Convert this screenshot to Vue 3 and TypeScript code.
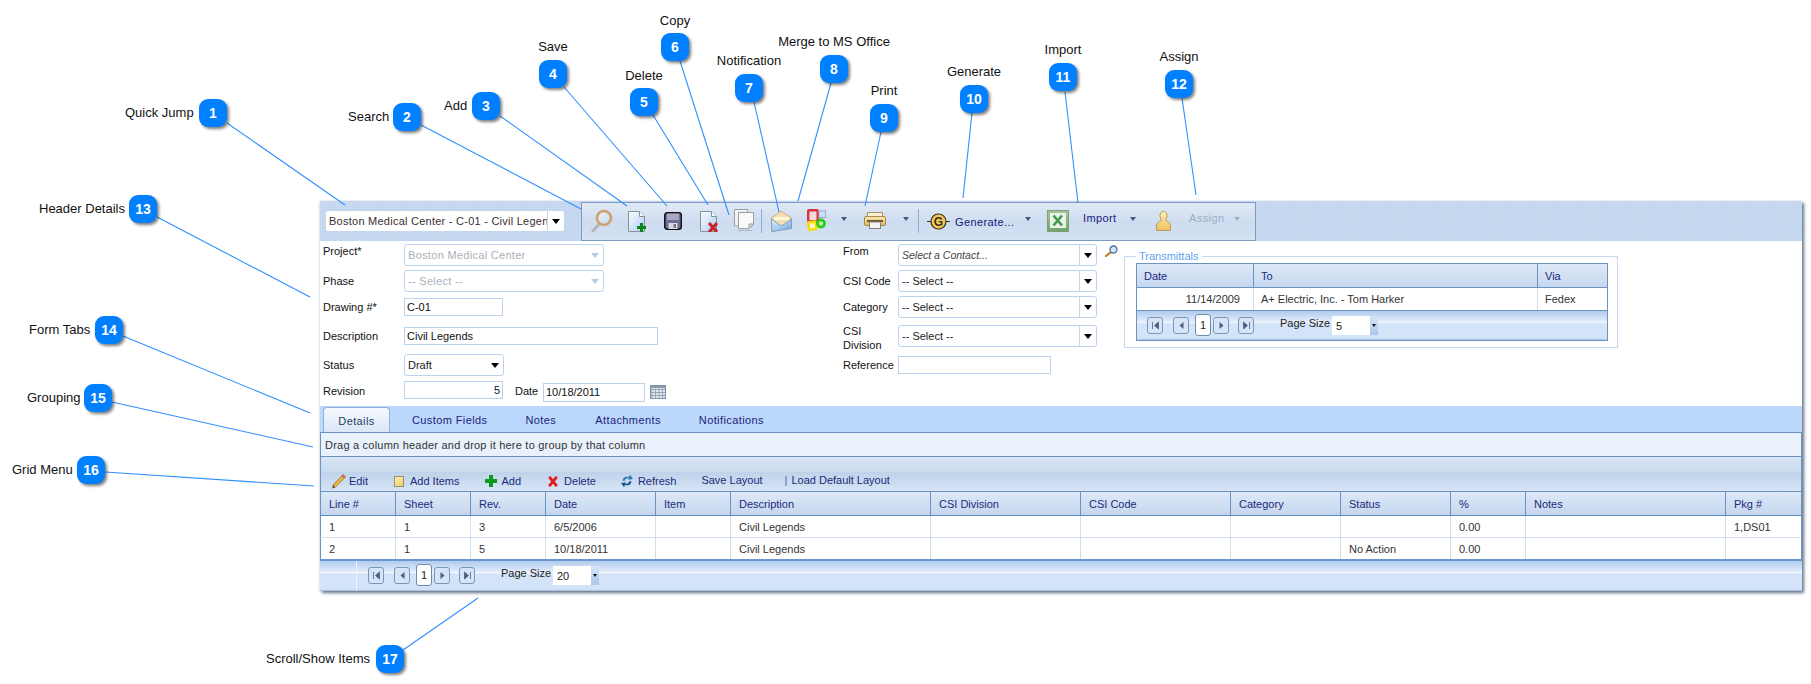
<script setup lang="ts">
interface Callout {
  n: number
  x: number
  y: number
  label: string
  lx: number
  ly: number
  centered: boolean
  line: [number, number, number, number]
}

const callouts: Callout[] = [
  { n: 1, x: 213, y: 113, label: 'Quick Jump', lx: 125, ly: 113, centered: false, line: [227, 123, 345, 205] },
  { n: 2, x: 407, y: 117, label: 'Search', lx: 348, ly: 117, centered: false, line: [421, 125, 581, 209] },
  { n: 3, x: 486, y: 106, label: 'Add', lx: 444, ly: 106, centered: false, line: [500, 116, 627, 206] },
  { n: 4, x: 553, y: 74, label: 'Save', lx: 553, ly: 47, centered: true, line: [564, 87, 667, 206] },
  { n: 5, x: 644, y: 102, label: 'Delete', lx: 644, ly: 76, centered: true, line: [653, 115, 708, 205] },
  { n: 6, x: 675, y: 47, label: 'Copy', lx: 675, ly: 21, centered: true, line: [680, 61, 729, 215] },
  { n: 7, x: 749, y: 88, label: 'Notification', lx: 749, ly: 61, centered: true, line: [754, 102, 779, 212] },
  { n: 8, x: 834, y: 69, label: 'Merge to MS Office', lx: 834, ly: 42, centered: true, line: [831, 83, 798, 201] },
  { n: 9, x: 884, y: 118, label: 'Print', lx: 884, ly: 91, centered: true, line: [881, 132, 865, 206] },
  { n: 10, x: 974, y: 99, label: 'Generate', lx: 974, ly: 72, centered: true, line: [972, 113, 963, 198] },
  { n: 11, x: 1063, y: 77, label: 'Import', lx: 1063, ly: 50, centered: true, line: [1065, 92, 1078, 203] },
  { n: 12, x: 1179, y: 84, label: 'Assign', lx: 1179, ly: 57, centered: true, line: [1182, 98, 1196, 195] },
  { n: 13, x: 143, y: 209, label: 'Header Details', lx: 39, ly: 209, centered: false, line: [157, 217, 310, 297] },
  { n: 14, x: 109, y: 330, label: 'Form Tabs', lx: 29, ly: 330, centered: false, line: [123, 336, 310, 413] },
  { n: 15, x: 98, y: 398, label: 'Grouping', lx: 27, ly: 398, centered: false, line: [112, 402, 313, 447] },
  { n: 16, x: 91, y: 470, label: 'Grid Menu', lx: 12, ly: 470, centered: false, line: [105, 472, 314, 486] },
  { n: 17, x: 390, y: 659, label: 'Scroll/Show Items', lx: 266, ly: 659, centered: false, line: [403, 650, 478, 598] }
]

const gridHeads: string[] = ['Line #', 'Sheet', 'Rev.', 'Date', 'Item', 'Description', 'CSI Division', 'CSI Code', 'Category', 'Status', '%', 'Notes', 'Pkg #']
const gridRows: string[][] = [
  ['1', '1', '3', '6/5/2006', '', 'Civil Legends', '', '', '', '', '0.00', '', '1,DS01'],
  ['2', '1', '5', '10/18/2011', '', 'Civil Legends', '', '', '', 'No Action', '0.00', '', '']
]
const tabs: string[] = ['Custom Fields', 'Notes', 'Attachments', 'Notifications']
const calCells: number[] = [0, 1, 2, 3]
</script>

<template>
  <div class="canvas">
    <div class="window">
      <header class="head">
        <div class="jump">
          <span class="jump-text">Boston Medical Center - C-01 - Civil Legends</span>
          <span class="drop"><i class="tri"></i></span>
        </div>
        <div class="ribbon">
          <svg class="ic i-search" viewBox="0 0 22 23" width="22" height="23">
            <defs>
              <linearGradient id="lens" x1="0" y1="0" x2="1" y2="1"><stop offset="0" stop-color="#eef4fb" /><stop offset="1" stop-color="#c3d6ec" /></linearGradient>
            </defs>
            <path d="M8 15L2 22" stroke="#b4b4b4" stroke-width="3" stroke-linecap="round" />
            <circle cx="13" cy="9" r="7" fill="url(#lens)" stroke="#c9a26e" stroke-width="2.6" />
          </svg>
          <svg class="ic i-add" viewBox="0 0 18 21" width="18" height="21">
            <defs>
              <linearGradient id="page" x1="0" y1="0" x2="1" y2="1"><stop offset="0" stop-color="#fff" /><stop offset="1" stop-color="#a9cbf4" /></linearGradient>
            </defs>
            <path d="M.5.5H11.500L16.500 5.500V20.500H.5Z" fill="url(#page)" stroke="#8b9098" />
            <path d="M11.500.5V5.500H16.500" fill="#fff" stroke="#8b9098" />
            <path d="M12 12h3v3h3v3h-3v3h-3v-3H9v-3h3z" fill="#07861c" />
          </svg>
          <svg class="ic i-save" viewBox="0 0 18 18" width="18" height="18">
            <rect x=".7" y=".7" width="16.600" height="16.600" rx="2.500" fill="#6f6a96" stroke="#111" stroke-width="1.400" />
            <rect x="3" y="1.500" width="12" height="6.500" fill="#a9a5c4" />
            <rect x="4.500" y="11" width="9" height="6" fill="#d8d8de" />
            <rect x="9.500" y="12" width="2.500" height="4" fill="#77738f" />
          </svg>
          <svg class="ic i-del" viewBox="0 0 18 21" width="18" height="21">
            <path d="M.5.5H11.500L16.500 5.500V20.500H.5Z" fill="url(#page)" stroke="#8b9098" />
            <path d="M11.500.5V5.500H16.500" fill="#fff" stroke="#8b9098" />
            <path d="M9 12l8 9M17 12l-8 9" stroke="#c8222a" stroke-width="3" />
          </svg>
          <svg class="ic i-copy" viewBox="0 0 20 22" width="20" height="22">
            <path d="M.5.5H13.500V17H.5Z" fill="#f2f2f2" stroke="#9a9fa6" />
            <path d="M4.500 3.500H19.500V15L15 19.500H4.500Z" fill="#fafafa" stroke="#9a9fa6" />
            <path d="M15 19.500V15H19.500Z" fill="#ddd" stroke="#9a9fa6" />
            <path d="M4 21.500H18" stroke="#a8b0ba" />
          </svg>
          <span class="sep s-a"></span>
          <svg class="ic i-mail" viewBox="0 0 21 22" width="21" height="22">
            <defs>
              <linearGradient id="env" x1="0" y1="0" x2="1" y2="1"><stop offset="0" stop-color="#e4f0fb" /><stop offset="1" stop-color="#6fa8de" /></linearGradient>
            </defs>
            <path d="M.5 8L10 1l10.500 7v9L1 21.500Z" fill="#f6deae" stroke="#b99a66" stroke-width=".7" />
            <path d="M3 7h15v3H3z" fill="#fff6dd" />
            <path d="M.5 9l10 7 10-7v9.500L1 21.500Z" fill="url(#env)" stroke="#6e93bb" stroke-width=".8" />
          </svg>
          <svg class="ic i-merge" viewBox="0 0 19 22" width="19" height="22">
            <rect x="1.200" y="1.200" width="9.500" height="11" rx="1" fill="#f5d9dc" stroke="#d8303c" stroke-width="2.400" />
            <rect x="12" y="2" width="6.500" height="6.500" fill="#cfe0f6" stroke="#8fb0de" />
            <rect x="1.500" y="13" width="7.500" height="7.500" rx="1" fill="#fff8b8" stroke="#f2dc10" stroke-width="2.600" transform="rotate(-8 5 16)" />
            <circle cx="14" cy="14.500" r="3.600" fill="#bdf0a0" stroke="#2ac818" stroke-width="2.600" />
          </svg>
          <i class="arr a-merge"></i>
          <svg class="ic i-print" viewBox="0 0 22 17" width="22" height="17">
            <defs>
              <linearGradient id="prt" x1="0" y1="0" x2="0" y2="1"><stop offset="0" stop-color="#fbeab8" /><stop offset="1" stop-color="#e6b24c" /></linearGradient>
            </defs>
            <rect x="3.500" y=".5" width="15" height="5" fill="#f8efd2" stroke="#aa9466" />
            <rect x=".5" y="4.500" width="21" height="9" rx="1.500" fill="url(#prt)" stroke="#a88b4e" />
            <rect x="3" y="8" width="16" height="2" fill="#6a5a3a" />
            <rect x="5.500" y="10" width="11" height="6.500" fill="#f4f4f4" stroke="#85827a" />
          </svg>
          <i class="arr a-print"></i>
          <span class="sep s-b"></span>
          <svg class="ic i-g" viewBox="0 0 23 17" width="23" height="17">
            <path d="M0 8.500H23" stroke="#333" />
            <circle cx="11.500" cy="8.500" r="7.500" fill="#f3c95c" stroke="#3b2f14" stroke-width="1.200" />
            <text x="11.500" y="13" class="g-letter" text-anchor="middle">G</text>
          </svg>
          <span class="tool-text t-generate">Generate...</span>
          <i class="arr a-gen"></i>
          <svg class="ic i-xl" viewBox="0 0 22 22" width="22" height="22">
            <defs>
              <linearGradient id="xl" x1="0" y1="0" x2="0" y2="1"><stop offset="0" stop-color="#a9c4a0" /><stop offset="1" stop-color="#6ea468" /></linearGradient>
            </defs>
            <rect x=".5" y=".5" width="21" height="21" fill="url(#xl)" stroke="#7aa074" />
            <rect x="3" y="3" width="16" height="15" fill="#e8f2e6" />
            <path d="M6.500 5.500l8.500 10M15 5.500L6.500 15.500" stroke="#3f9a4a" stroke-width="2.600" />
          </svg>
          <span class="tool-text t-import">Import</span>
          <i class="arr a-imp"></i>
          <svg class="ic i-person" viewBox="0 0 15 20" width="15" height="20">
            <defs>
              <linearGradient id="per" x1="0" y1="0" x2="0" y2="1"><stop offset="0" stop-color="#fff0b0" /><stop offset="1" stop-color="#f0c060" /></linearGradient>
            </defs>
            <path d="M7.500.5C10 .5 11 2.500 11 4.500S10 8 9.500 9c0 1 4.500 2 5 5v5.500H.5V14C1 11 5.500 10 5.500 9 5 8 4 6.500 4 4.500S5 .5 7.500.5Z" fill="url(#per)" stroke="#b79a5a" />
          </svg>
          <span class="tool-text t-assign">Assign</span>
          <i class="arr a-assign"></i>
        </div>
      </header>

      <section class="form">
        <div class="col-left">
          <div class="row r-project">
            <label class="lab lab-top">Project*</label>
            <div class="combo combo-wide off"><span class="combo-text">Boston Medical Center</span><i class="tri tri-off"></i></div>
          </div>
          <div class="row r-phase">
            <label class="lab">Phase</label>
            <div class="combo combo-wide off"><span class="combo-text">-- Select --</span><i class="tri tri-off"></i></div>
          </div>
          <div class="row r-drawing">
            <label class="lab">Drawing #*</label>
            <div class="field f-short">C-01</div>
          </div>
          <div class="row r-desc">
            <label class="lab">Description</label>
            <div class="field f-long">Civil Legends</div>
          </div>
          <div class="row r-status">
            <label class="lab">Status</label>
            <div class="combo combo-status"><span class="combo-text dark">Draft</span><i class="tri"></i></div>
          </div>
          <div class="row r-rev">
            <label class="lab">Revision</label>
            <div class="field f-short num">5</div>
            <label class="lab-date">Date</label>
            <div class="field f-date">10/18/2011</div>
            <svg class="cal" viewBox="0 0 16 14" width="16" height="14">
              <rect x=".5" y=".5" width="15" height="13" fill="#dfe6ee" stroke="#7f8ea0" />
              <rect x="1" y="1" width="14" height="2" fill="#8a9bb0" />
              <g v-for="c in calCells" :key="c">
                <path :d="`M${2 + c * 3.5} 3.500V13`" stroke="#8a9bb0" stroke-width=".8" />
                <path :d="`M1 ${4.5 + c * 3}H15`" stroke="#8a9bb0" stroke-width=".8" />
              </g>
            </svg>
          </div>
        </div>

        <div class="col-right">
          <div class="row r-from">
            <label class="lab2 lab-top">From</label>
            <div class="combo combo-r"><em class="combo-text contact">Select a Contact...</em><span class="drop"><i class="tri"></i></span></div>
            <svg class="mini-search" viewBox="0 0 15 12" width="15" height="12">
              <path d="M7 7L2 11" stroke="#c47a20" stroke-width="2.200" stroke-linecap="round" />
              <circle cx="9.500" cy="4.500" r="3.500" fill="#cfe3f6" stroke="#4a6f98" stroke-width="1.300" />
            </svg>
          </div>
          <div class="row r-phase">
            <label class="lab2">CSI Code</label>
            <div class="combo combo-r"><span class="combo-text dark">-- Select --</span><span class="drop"><i class="tri"></i></span></div>
          </div>
          <div class="row r-cat">
            <label class="lab2">Category</label>
            <div class="combo combo-r"><span class="combo-text dark">-- Select --</span><span class="drop"><i class="tri"></i></span></div>
          </div>
          <div class="row r-div">
            <label class="lab2 lab-wrap">CSI Division</label>
            <div class="combo combo-r"><span class="combo-text dark">-- Select --</span><span class="drop"><i class="tri"></i></span></div>
          </div>
          <div class="row r-ref">
            <label class="lab2">Reference</label>
            <div class="field f-ref"></div>
          </div>
        </div>

        <fieldset class="trans">
          <legend>Transmittals</legend>
          <div class="tgrid">
            <div class="t-row t-head"><span>Date</span><span>To</span><span>Via</span></div>
            <div class="t-row t-body"><span class="t-date">11/14/2009</span><span>A+ Electric, Inc. - Tom Harker</span><span>Fedex</span></div>
            <div class="pager t-pager">
              <button class="pg first" type="button"><svg viewBox="0 0 9 9" width="9" height="9"><path d="M1.500 1v7M7.500 1L3.500 4.500l4 3.500z" fill="#4b5f80" stroke="#4b5f80" stroke-width=".8" /></svg></button>
              <button class="pg prev" type="button"><svg viewBox="0 0 9 9" width="9" height="9"><path d="M6.500 1L2.500 4.500l4 3.500z" fill="#4b5f80" /></svg></button>
              <span class="pg-cur">1</span>
              <button class="pg next" type="button"><svg viewBox="0 0 9 9" width="9" height="9"><path d="M2.500 1l4 3.500-4 3.500z" fill="#4b5f80" /></svg></button>
              <button class="pg last" type="button"><svg viewBox="0 0 9 9" width="9" height="9"><path d="M7.500 1v7M1.500 1l4 3.500-4 3.500z" fill="#4b5f80" stroke="#4b5f80" stroke-width=".8" /></svg></button>
              <span class="pg-label">Page Size</span>
              <div class="pg-size"><span>5</span><b class="pg-arrow"><i></i></b></div>
            </div>
          </div>
        </fieldset>
      </section>

      <nav class="tabs">
        <span class="tab active">Details</span>
        <span v-for="t in tabs" :key="t" class="tab">{{ t }}</span>
      </nav>

      <div class="group-bar">Drag a column header and drop it here to group by that column</div>

      <div class="menu">
        <span class="m m-edit">
          <svg viewBox="0 0 15 16" width="15" height="16"><path d="M2 12L12 1.500l2.500 2.500L4 14.500Z" fill="#e8b23c" stroke="#9a6a2a" stroke-width=".7" /><path d="M12 1.500l2.500 2.500-1.500 1.500L10.500 3Z" fill="#c86a5a" /><path d="M2 12l2 2.500-3 1z" fill="#5a4a3a" /></svg>
          Edit
        </span>
        <span class="m m-items"><i class="sq"></i>Add Items</span>
        <span class="m m-add">
          <svg viewBox="0 0 12 12" width="12" height="12"><path d="M4 0h4v4h4v4H8v4H4V8H0V4h4z" fill="#0a9a1c" /></svg>
          Add
        </span>
        <span class="m m-del">
          <svg viewBox="0 0 10 11" width="10" height="11"><path d="M1.200 .8l7.600 9.400M8.800 .8L1.200 10.200" stroke="#e01c1c" stroke-width="2.800" /></svg>
          Delete
        </span>
        <span class="m m-ref">
          <svg viewBox="0 0 12 14" width="12" height="14"><path d="M1.500 6.500C2 3 5 2 8 3L9 .8l3 4.200-5 .8L8 4.500C5.500 4 4 5 3.500 7Z" fill="#2a7ab8" /><path d="M10.500 7.500C10 11 7 12 4 11l-1 2.200L0 9l5-.8L4 9.500c2.500.5 4-.5 4.500-2.500Z" fill="#1a5a94" /></svg>
          Refresh
        </span>
        <span class="m m-save">Save Layout</span>
        <span class="m m-bar">|</span>
        <span class="m m-load">Load Default Layout</span>
      </div>

      <div class="g-row g-head"><span v-for="h in gridHeads" :key="h">{{ h }}</span></div>
      <div v-for="(r, i) in gridRows" :key="i" class="g-row g-body" :class="{ second: i === 1 }">
        <span v-for="(c, j) in r" :key="j">{{ c }}</span>
      </div>

      <footer class="pager w-pager">
        <span class="pg-sep"></span>
        <button class="pg first" type="button"><svg viewBox="0 0 9 9" width="9" height="9"><path d="M1.500 1v7M7.500 1L3.500 4.500l4 3.500z" fill="#4b5f80" stroke="#4b5f80" stroke-width=".8" /></svg></button>
        <button class="pg prev" type="button"><svg viewBox="0 0 9 9" width="9" height="9"><path d="M6.500 1L2.500 4.500l4 3.500z" fill="#4b5f80" /></svg></button>
        <span class="pg-cur">1</span>
        <button class="pg next" type="button"><svg viewBox="0 0 9 9" width="9" height="9"><path d="M2.500 1l4 3.500-4 3.500z" fill="#4b5f80" /></svg></button>
        <button class="pg last" type="button"><svg viewBox="0 0 9 9" width="9" height="9"><path d="M7.500 1v7M1.500 1l4 3.500-4 3.500z" fill="#4b5f80" stroke="#4b5f80" stroke-width=".8" /></svg></button>
        <span class="pg-label">Page Size</span>
        <div class="pg-size"><span>20</span><b class="pg-arrow"><i></i></b></div>
      </footer>
    </div>

    <svg class="leaders" viewBox="0 0 1811 684" width="1811" height="684">
      <line v-for="c in callouts" :key="c.n" :x1="c.line[0]" :y1="c.line[1]" :x2="c.line[2]" :y2="c.line[3]" />
    </svg>
    <template v-for="c in callouts" :key="c.n">
      <span class="c-label" :class="{ centered: c.centered }" :style="{ left: c.lx + 'px', top: c.ly + 'px' }">{{ c.label }}</span>
      <span class="badge" :style="{ left: c.x - 14 + 'px', top: c.y - 14 + 'px' }">{{ c.n }}</span>
    </template>
  </div>
</template>

<style scoped>
.canvas {
  position: relative;
  width: 1811px;
  height: 684px;
  overflow: hidden;
  background: #fff;
  font-family: "Liberation Sans", Arial, sans-serif;
  font-size: 11px;
  color: #222;
}
.window {
  width: 1482px;
  margin: 201px 0 0 320px;
  position: absolute;
  box-shadow: 2px 2px 3px rgba(50, 70, 100, 0.75), -1px 0 2px rgba(120, 130, 150, 0.2);
  background: #fff;
}

/* header */
.head {
  height: 40px;
  display: flex;
  background: #c5d7ee;
  background-image: radial-gradient(#d0dff2 1px, transparent 1px);
  background-size: 3px 3px;
}
.jump {
  width: 238px;
  height: 20px;
  margin: 10px 0 0 6px;
  display: flex;
  align-items: center;
  background: #fff;
  border-radius: 2px;
}
.jump-text {
  flex: 1;
  min-width: 0;
  padding-left: 3px;
  font-size: 11px;
  letter-spacing: 0.25px;
  white-space: nowrap;
  overflow: hidden;
  color: #3a3030;
}
.drop {
  width: 16px;
  align-self: stretch;
  border-left: 1px solid #c5d7ee;
  display: flex;
  align-items: center;
  justify-content: center;
  flex: none;
}
.tri {
  width: 0;
  height: 0;
  border-left: 4px solid transparent;
  border-right: 4px solid transparent;
  border-top: 5px solid #000;
  flex: none;
}
.tri-off { border-top-color: #b7cbe4; margin-right: 4px; }
.ribbon {
  width: 675px;
  height: 39px;
  margin: 1px 0 0 17px;
  box-sizing: border-box;
  border: 1px solid #7c9ac2;
  background: linear-gradient(#e0e9f6, #cddcef 55%, #d4e2f3);
  display: flex;
  align-items: flex-start;
}
.ic { display: block; flex: none; }
.i-search { margin: 6px 0 0 9px; }
.i-add { margin: 8px 0 0 15px; }
.i-save { margin: 9px 0 0 18px; }
.i-del { margin: 8px 0 0 18px; }
.i-copy { margin: 6px 0 0 16px; }
.sep { width: 1px; height: 24px; background: #8fb0d8; margin-top: 6px; flex: none; }
.s-a { margin-left: 7px; }
.s-b { margin-left: 9px; }
.i-mail { margin: 7px 0 0 9px; }
.i-merge { margin: 6px 0 0 15px; }
.arr {
  width: 0;
  height: 0;
  flex: none;
  margin-top: 14px;
  border-left: 3.5px solid transparent;
  border-right: 3.5px solid transparent;
  border-top: 4px solid #46587e;
}
.a-merge { margin-left: 15px; }
.i-print { margin: 9px 0 0 17px; }
.a-print { margin-left: 17px; }
.i-g { margin: 10px 0 0 8px; }
.g-letter { font: bold 12px "Liberation Sans", sans-serif; fill: #3b2f14; }
.tool-text { flex: none; font-size: 11px; letter-spacing: 0.4px; color: #17187a; }
.t-generate { width: 55px; margin: 13px 0 0 5px; white-space: nowrap; }
.a-gen { margin-left: 15px; }
.i-xl { margin: 7px 0 0 16px; }
.t-import { width: 35px; margin: 9px 0 0 14px; }
.a-imp { margin-left: 12px; }
.i-person { margin: 8px 0 0 20px; }
.t-assign { width: 34px; margin: 9px 0 0 18px; color: #9badc6; }
.a-assign { margin-left: 11px; border-top-color: #9badc6; }

/* form */
.form {
  height: 165px;
  display: flex;
  align-items: flex-start;
  padding: 3px 0 0 3px;
  box-sizing: border-box;
}
.col-left { width: 520px; flex: none; }
.col-right { width: 281px; flex: none; }
.row { display: flex; align-items: center; }
.lab { width: 81px; flex: none; font-size: 11px; color: #111; }
.lab2 { width: 55px; flex: none; font-size: 11px; color: #111; }
.lab-top { align-self: flex-start; line-height: 14px; }
.lab-wrap { line-height: 14px; padding-top: 3px; box-sizing: border-box; }
.r-project { height: 22px; }
.r-phase { height: 22px; margin-top: 4px; }
.r-drawing { height: 18px; margin-top: 6px; }
.r-desc { height: 18px; margin-top: 11px; }
.r-status { height: 22px; margin-top: 9px; }
.r-rev { height: 21px; margin-top: 5px; align-items: flex-start; }
.r-rev .lab { padding-top: 4px; }
.r-cat { height: 22px; margin-top: 4px; }
.r-div { height: 22px; margin-top: 7px; }
.r-ref { height: 18px; margin-top: 9px; }
.combo {
  height: 22px;
  box-sizing: border-box;
  border: 1px solid #bcd3ef;
  border-radius: 3px;
  display: flex;
  align-items: center;
  background: #fff;
  font-size: 11px;
}
.combo-wide { width: 200px; }
.combo-status { width: 100px; padding-right: 4px; }
.combo-r { width: 199px; }
.combo-text { flex: 1; padding-left: 3px; white-space: nowrap; }
.dark { color: #222; }
.contact { color: #444; font-size: 10.5px; }
.off .combo-text { color: #a8b0bb; font-size: 11px; letter-spacing: 0.3px; }
.field {
  height: 18px;
  box-sizing: border-box;
  border: 1px solid #bcd3ef;
  padding-left: 2px;
  line-height: 16px;
  background: #fff;
  color: #111;
  font-size: 11px;
}
.f-short { width: 99px; }
.f-long { width: 254px; }
.f-ref { width: 153px; }
.f-date { width: 102px; height: 19px; margin-top: 2px; }
.num { text-align: right; padding-right: 2px; }
.lab-date { width: 28px; margin-left: 12px; padding-top: 4px; color: #111; flex: none; }
.cal { margin: 4px 0 0 5px; flex: none; }
.mini-search { margin: -8px 0 0 7px; flex: none; }

/* transmittals */
.trans {
  width: 494px;
  box-sizing: border-box;
  margin: 5px 0 0 0;
  padding: 0 9px 6px 11px;
  border: 1px solid #c6d8ee;
  flex: none;
  min-width: 0;
}
.trans legend {
  margin-left: 0;
  padding: 0 3px;
  font-size: 11px;
  line-height: 14px;
  color: #5f9ff0;
}
.tgrid { width: 472px; box-sizing: border-box; border: 1px solid #6c92c0; }
.t-row { display: grid; grid-template-columns: 117px 284px 1fr; }
.t-row span { padding-left: 7px; border-right: 1px solid #d0dcec; display: flex; align-items: center; }
.t-row span:last-child { border-right: 0; }
.t-head {
  height: 24px;
  box-sizing: border-box;
  background: linear-gradient(#dfe9f8, #c5d7ef);
  color: #1b2a7c;
  border-bottom: 1px solid #6c92c0;
}
.t-head span { border-right-color: #6c92c0; }
.t-body { height: 22px; color: #333; }
.t-date { justify-content: flex-end; padding: 0 13px 0 0 !important; }

/* pagers */
.pager {
  display: flex;
  box-sizing: border-box;
  position: relative;
  background: linear-gradient(#b0cbee 0, #dfeafa 34%, #f4f8fe 38%, #d3e3f8 44%, #d3e3f8 94%, #a3bbdb 100%);
  border-top: 1px solid #6c92c0;
  align-items: flex-start;
}
.t-pager { height: 30px; }
.w-pager { height: 32px; padding-left: 37px; border-top: 2px solid #6c96d0; }
.pg-sep { position: absolute; left: 36px; top: 0; bottom: 0; width: 1px; background: #eef4fc; }
.pg {
  width: 16px;
  height: 17px;
  margin-top: 6px;
  padding: 0;
  flex: none;
  border: 1px solid #7c96ba;
  border-radius: 3px;
  background: #d6e4f7;
  display: flex;
  align-items: center;
  justify-content: center;
}
.pg svg { display: block; }
.pg-cur {
  width: 16px;
  height: 22px;
  margin-top: 3px;
  box-sizing: border-box;
  border: 1px solid #6f8ab0;
  border-radius: 3px;
  background: #fff;
  text-align: center;
  line-height: 20px;
  flex: none;
}
.first { margin-left: 11px; }
.t-pager .first { margin-left: 10px; }
.prev { margin-left: 10px; }
.pg-cur { margin-left: 6px; }
.next { margin-left: 2px; }
.last { margin-left: 9px; }
.pg-label { margin: 6px 0 0 26px; width: 48px; white-space: nowrap; color: #222; flex: none; }
.pg-size {
  margin: 5px 0 0 4px;
  width: 46px;
  height: 19px;
  background: #fff;
  display: flex;
  padding-left: 4px;
  box-sizing: border-box;
  line-height: 21px;
  flex: none;
}
.pg-size span { flex: 1; }
.pg-arrow {
  width: 8px;
  background: linear-gradient(#d6e5f8, #a9c6ec);
  display: flex;
  align-items: center;
  justify-content: center;
}
.pg-arrow i {
  width: 0;
  height: 0;
  border-left: 2.5px solid transparent;
  border-right: 2.5px solid transparent;
  border-top: 3px solid #111;
}

/* tabs */
.tabs {
  height: 26px;
  background: #bbd8fc;
  display: flex;
  align-items: flex-end;
  box-sizing: border-box;
  padding-left: 2px;
  border-left: 1px solid #bbd8fc;
}
.tab {
  font-size: 11px;
  letter-spacing: 0.4px;
  height: 25px;
  line-height: 26px;
  color: #1d1c7a;
  flex: none;
}
.tab:nth-child(2) { margin-left: 22px; }
.tab:nth-child(3) { margin-left: 38px; }
.tab:nth-child(4) { margin-left: 39px; }
.tab:nth-child(5) { margin-left: 38px; }
.tab.active {
  width: 67px;
  box-sizing: border-box;
  text-align: center;
  border: 1px solid #8fb2de;
  border-bottom: 0;
  border-radius: 4px 4px 0 0;
  background: linear-gradient(#f5f9fe, #dbe7f6);
  color: #1f3f66;
}
.group-bar {
  height: 25px;
  box-sizing: border-box;
  background: #e9f1fc;
  border: 1px solid #6c92c0;
  padding-left: 4px;
  line-height: 24px;
  letter-spacing: 0.22px;
  color: #333;
}

/* grid menu */
.menu {
  height: 35px;
  box-sizing: border-box;
  display: flex;
  align-items: flex-end;
  padding: 0 0 2px 0;
  border: 1px solid #6c92c0;
  border-width: 0 1px 1px 1px;
  background: linear-gradient(#d8e5f4, #cbdcef 42%, #bed2ea 44%, #d6e4f5);
  color: #1b2a7c;
}
.m { display: flex; align-items: center; gap: 3px; white-space: nowrap; flex: none; height: 16px; }
.m-edit { margin-left: 10px; }
.m-items { margin-left: 26px; gap: 6px; }
.sq { width: 8px; height: 9px; display: block; border: 1px solid #9a8f6a; background: linear-gradient(135deg, #fbf0b0, #eccf70); }
.m-add { margin-left: 25px; gap: 5px; }
.m-del { margin-left: 27px; gap: 6px; }
.m-ref { margin-left: 25px; gap: 5px; }
.m-save { margin-left: 25px; position: relative; top: -1px; }
.m-bar { margin-left: 22px; position: relative; top: -1px; color: #3a6ab0; }
.m-load { margin-left: 4px; position: relative; top: -1px; }

/* main grid */
.g-row {
  display: grid;
  grid-template-columns: 75px 75px 75px 110px 75px 200px 150px 150px 110px 110px 75px 200px 75px;
  box-sizing: border-box;
  border: 1px solid #6c92c0;
  border-width: 0 1px;
}
.g-row span { padding-left: 8px; box-sizing: border-box; display: flex; align-items: center; }
.g-head {
  height: 24px;
  background: linear-gradient(#dfe9f8, #c4d6ee);
  border-bottom: 1px solid #5e8ac4;
  color: #1b2a7c;
}
.g-head span { border-right: 1px solid #6c92c0; }
.g-head span:last-child { border-right: 0; }
.g-body { height: 22px; color: #333; border-bottom: 1px solid #d3deec; }
.g-body.second { height: 21px; border-bottom: 0; }
.g-body span { border-right: 1px solid #d3deec; }
.g-body span:last-child { border-right: 0; }

/* annotations */
.leaders { position: absolute; left: 0; top: 0; pointer-events: none; }
.leaders line { stroke: #2f90ff; stroke-width: 1.1; }
.c-label {
  position: absolute;
  font-size: 13px;
  line-height: 16px;
  color: #111;
  white-space: nowrap;
  transform: translateY(-50%);
}
.c-label.centered { transform: translate(-50%, -50%); }
.badge {
  position: absolute;
  width: 28px;
  height: 28px;
  border-radius: 9px;
  background: #0080ff;
  color: #fff;
  font-size: 14px;
  font-weight: bold;
  line-height: 28px;
  text-align: center;
  box-shadow: 2px 2px 3px rgba(0, 0, 0, 0.5);
}
</style>

<style>
body { margin: 0; background: #fff; }
</style>
